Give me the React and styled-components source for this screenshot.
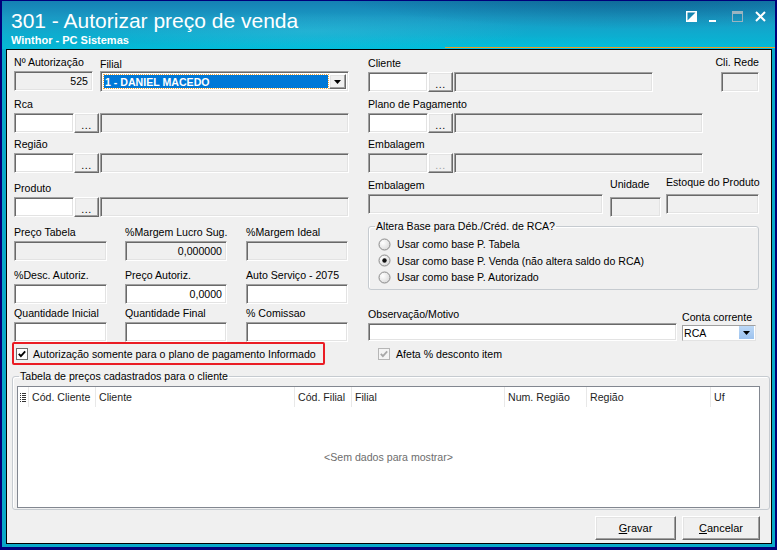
import React from "react";
import styled, { createGlobalStyle, css } from "styled-components";

const GlobalStyle = createGlobalStyle`
  html, body {
    margin: 0;
    padding: 0;
    background: #00007a;
  }
  * {
    box-sizing: border-box;
  }
`;

const sunken = css`
  border: 1px solid;
  border-color: #a0a0a0 #ffffff #ffffff #a0a0a0;
  box-shadow: inset 1px 1px 0 #696969, inset -1px -1px 0 #e3e3e3;
`;

const raised = css`
  border: 1px solid;
  border-color: #ffffff #696969 #696969 #ffffff;
  box-shadow: inset -1px -1px 0 #a0a0a0, inset 1px 1px 0 #e3e3e3;
`;

const Window = styled.div`
  width: 777px;
  height: 550px;
  display: flex;
  flex-direction: column;
  border: 2px solid #00007a;
  border-top-width: 1px;
  border-bottom-width: 3px;
  background: #08a8c8;
  font-family: "Liberation Sans", Arial, sans-serif;
`;

const TitleBar = styled.div`
  flex: none;
  height: 48px;
  display: flex;
  flex-direction: column;
  color: #fff;
  background:
    radial-gradient(ellipse 460px 60px at 82% -14px, rgba(6, 70, 110, 0.55), transparent 70%),
    radial-gradient(ellipse 320px 26px at 40% 30px, rgba(120, 220, 240, 0.18), transparent 70%),
    radial-gradient(ellipse 700px 34px at 60% 58px, rgba(0, 196, 224, 0.95), transparent 70%),
    linear-gradient(180deg, #1580b4 0%, #1a9ac4 35%, #0eaccf 70%, #04b8d6 100%);
`;

const TitleRow = styled.div`
  display: flex;
  align-items: flex-start;
  padding: 0 9px 0 9px;
`;

const Caption = styled.div`
  font-size: 21px;
  line-height: 24px;
  padding-top: 8px;
`;

const Controls = styled.div`
  margin-left: auto;
  display: flex;
  gap: 12px;
  padding-top: 10px;
`;

const Subtitle = styled.div`
  padding-left: 9px;
  padding-top: 1px;
  font-size: 11px;
  font-weight: bold;
  line-height: 13px;
`;

const Stripe = styled.div`
  margin: auto 0 1px auto;
  width: 330px;
  height: 2px;
  background: #f29a1c;
`;

const Body = styled.div`
  flex: 1;
  display: flex;
  padding: 0 3px 3px 4px;
`;

const Panel = styled.div`
  flex: 1;
  display: flex;
  flex-direction: column;
  border: 1px solid #000;
  background: #f0f0f0;
  font-size: 10.6px;
  color: #000;
`;

const Form = styled.div`
  display: flex;
  align-items: flex-start;
  gap: 19px;
  padding: 5px 11px 0 7px;
`;

const Column = styled.div`
  width: ${(p) => p.$w}px;
  display: flex;
  flex-direction: column;
`;

const Row = styled.div`
  display: flex;
  align-items: ${(p) => p.$align || "flex-start"};
  justify-content: ${(p) => p.$justify || "flex-start"};
  gap: ${(p) => p.$gap || 0}px;
  margin-top: ${(p) => p.$mt || 0}px;
`;

const Field = styled.div`
  display: flex;
  flex-direction: column;
  align-items: ${(p) => (p.$right ? "flex-end" : "stretch")};
  width: ${(p) => (p.$w ? `${p.$w}px` : "auto")};
  margin-left: ${(p) => p.$ml || 0}px;
`;

const Label = styled.div`
  height: 14px;
  line-height: 14px;
  white-space: nowrap;
  margin-top: ${(p) => p.$mt || 0}px;
  margin-bottom: ${(p) => (p.$mb === undefined ? 2 : p.$mb)}px;
`;

const TextBox = styled.div`
  ${sunken};
  width: ${(p) => (p.$w ? `${p.$w}px` : "100%")};
  height: ${(p) => p.$h || 20}px;
  background: ${(p) => (p.$white ? "#fff" : "#f0f0f0")};
  text-align: ${(p) => p.$align || "left"};
  padding: 0 4px;
  line-height: ${(p) => (p.$h || 20) - 2}px;
  flex: none;
`;

const Lookup = styled.div`
  display: flex;
  height: 20px;
`;

const DotsButton = styled.div`
  ${raised};
  width: 25px;
  height: 20px;
  margin-right: 1px;
  background: #f0f0f0;
  color: ${(p) => (p.$disabled ? "#a0a0a0" : "#000")};
  line-height: 22px;
  text-align: center;
  letter-spacing: 0.5px;
`;

const Combo = styled.div`
  ${sunken};
  width: ${(p) => p.$w}px;
  height: 21px;
  background: #fff;
  display: flex;
  padding: 2px;
`;

const Selection = styled.div`
  flex: 1;
  margin: 1px;
  background: #0078d7;
  outline: 1px dotted #f3a63a;
  color: #fff;
  font-weight: bold;
  line-height: 15px;
  padding-left: 1px;
`;

const DropButton = styled.div`
  ${raised};
  width: 17px;
  background: #f0f0f0;
  display: flex;
  align-items: center;
  justify-content: center;
`;

const SmallCombo = styled.div`
  width: ${(p) => p.$w}px;
  height: 16px;
  border: 1px solid;
  border-color: #a0a0a0 #e3e3e3 #e3e3e3 #a0a0a0;
  background: #fff;
  display: flex;
  align-items: center;
  padding-left: 1px;
`;

const SmallComboText = styled.div`
  flex: 1;
  line-height: 14px;
`;

const BlueDrop = styled.div`
  width: 15px;
  height: 13px;
  margin-right: 1px;
  background: linear-gradient(180deg, #bcd8f6, #9cc2ee);
  display: flex;
  align-items: center;
  justify-content: center;
`;

const Highlight = styled.div`
  display: flex;
  align-items: center;
  gap: 5px;
  width: 313px;
  height: 23px;
  margin-left: -2px;
  padding-left: 2px;
  border: 2px solid #ea1c24;
  border-radius: 2px;
  white-space: nowrap;
`;

const CheckLine = styled.div`
  display: flex;
  align-items: center;
  gap: ${(p) => p.$gap || 5}px;
  height: 14px;
  margin-top: ${(p) => p.$mt || 0}px;
  padding-left: ${(p) => p.$pl || 0}px;
  white-space: nowrap;
`;

const Group = styled.fieldset`
  margin: ${(p) => p.$margin};
  padding: ${(p) => p.$padding};
  border: 1px solid #c6cbd0;
  border-radius: 3px;
  box-shadow: inset 1px 1px 0 #ffffff;
  min-width: 0;
`;

const Legend = styled.legend`
  padding: 0 1px;
  margin-left: ${(p) => p.$ml || 0}px;
  line-height: 14px;
  font-size: 10.6px;
`;

const RadioLine = styled.div`
  display: flex;
  align-items: center;
  gap: 6px;
  height: 16.5px;
  white-space: nowrap;
`;

const Table = styled.div`
  height: 122px;
  display: flex;
  flex-direction: column;
  background: #fff;
  border: 1px solid #828790;
`;

const HeaderRow = styled.div`
  display: grid;
  grid-template-columns: 11px 67px 199px 57px 153px 82px 124px 1fr;
  height: 20px;
  color: #1e1e1e;
`;

const HeaderCell = styled.div`
  display: flex;
  align-items: center;
  justify-content: ${(p) => (p.$icon ? "center" : "flex-start")};
  padding-left: ${(p) => (p.$icon ? 0 : 3)}px;
  border-right: 1px solid #e8e8e8;
  white-space: nowrap;
  &:last-child {
    border-right: none;
  }
`;

const EmptyState = styled.div`
  flex: 1;
  display: flex;
  align-items: center;
  justify-content: center;
  color: #6d6d6d;
`;

const Footer = styled.div`
  display: flex;
  justify-content: flex-end;
  gap: 6px;
  padding: 6px 11px 0 0;
`;

const Button = styled.div`
  ${raised};
  width: ${(p) => p.$w}px;
  height: 24px;
  background: #f0f0f0;
  display: flex;
  align-items: center;
  justify-content: center;
  font-size: 11px;
`;

const Arrow = () => (
  <svg width="7" height="4" viewBox="0 0 7 4">
    <path d="M0 0H7L3.5 4Z" fill="#000" />
  </svg>
);

const Check = ({ disabled }) => (
  <svg width="12" height="12" viewBox="0 0 12 12">
    <rect
      x="0.5"
      y="0.5"
      width="11"
      height="11"
      fill={disabled ? "#f4f4f4" : "#fff"}
      stroke={disabled ? "#b6b6b6" : "#6e6e6e"}
    />
    <path
      d="M2.8 5.8L4.9 8.2L9.2 3.4"
      fill="none"
      stroke={disabled ? "#a8a8a8" : "#000"}
      strokeWidth="1.8"
    />
  </svg>
);

const Radio = ({ checked }) => (
  <svg width="13" height="13" viewBox="0 0 13 13">
    <defs>
      <radialGradient id="rb" cx="0.35" cy="0.35" r="0.75">
        <stop offset="0" stopColor="#ffffff" />
        <stop offset="1" stopColor="#d8d8d8" />
      </radialGradient>
    </defs>
    <circle cx="6.5" cy="6.5" r="5.5" fill="url(#rb)" stroke="#8a8a8a" />
    {checked && <circle cx="6.5" cy="6.5" r="2.2" fill="#111" />}
  </svg>
);

const GridIcon = () => (
  <svg width="6" height="9" viewBox="0 0 6 9">
    {[0, 2, 4, 6, 8].map((y) => (
      <g key={y}>
        <rect x="0" y={y} width="1" height="1" fill="#333" />
        <rect x="2" y={y} width="4" height="1" fill="#333" />
      </g>
    ))}
  </svg>
);

const WindowIcons = () => (
  <Controls>
    <svg width="11" height="11" viewBox="0 0 11 11">
      <rect x="0.75" y="0.75" width="9.5" height="9.5" fill="none" stroke="#fff" strokeWidth="1.5" />
      <path d="M10 1V10H1Z" fill="#fff" />
    </svg>
    <svg width="11" height="11" viewBox="0 0 11 11">
      <rect x="0" y="9" width="7" height="2" fill="#fff" />
    </svg>
    <svg width="11" height="11" viewBox="0 0 11 11">
      <rect x="0.5" y="0.5" width="10" height="10" fill="none" stroke="#9ab4c0" />
      <rect x="0" y="0" width="11" height="3" fill="#9ab4c0" />
    </svg>
    <svg width="11" height="11" viewBox="0 0 11 11">
      <path d="M1 1L10 10M10 1L1 10" stroke="#fff" strokeWidth="2" />
    </svg>
  </Controls>
);

const columns = [
  "Cód. Cliente",
  "Cliente",
  "Cód. Filial",
  "Filial",
  "Num. Região",
  "Região",
  "Uf",
];

// lookup = code box + "..." button + description box
const LookupField = ({ label, descWidth, disabled }) => (
  <Field $w={60 + 26 + descWidth}>
    <Label>{label}</Label>
    <Lookup>
      <TextBox $w={60} $white={!disabled} />
      <DotsButton $disabled={disabled}>...</DotsButton>
      <TextBox $w={descWidth} />
    </Lookup>
  </Field>
);

export default function App() {
  return (
    <>
      <GlobalStyle />
      <Window>
        <TitleBar>
          <TitleRow>
            <Caption>301 - Autorizar preço de venda</Caption>
            <WindowIcons />
          </TitleRow>
          <Subtitle>Winthor - PC Sistemas</Subtitle>
          <Stripe />
        </TitleBar>
        <Body>
          <Panel>
            <Form>
              <Column $w={335}>
                <Row $gap={7}>
                  <Field $w={79}>
                    <Label>Nº Autorização</Label>
                    <TextBox $align="right">525</TextBox>
                  </Field>
                  <Field $w={249}>
                    <Label $mt={2} $mb={0}>Filial</Label>
                    <Combo $w={249}>
                      <Selection>1 - DANIEL MACEDO</Selection>
                      <DropButton>
                        <Arrow />
                      </DropButton>
                    </Combo>
                  </Field>
                </Row>
                <Row $mt={5}>
                  <LookupField label="Rca" descWidth={249} />
                </Row>
                <Row $mt={4}>
                  <LookupField label="Região" descWidth={249} />
                </Row>
                <Row $mt={8}>
                  <LookupField label="Produto" descWidth={249} />
                </Row>
                <Row $mt={8} $gap={18}>
                  <Field $w={93}>
                    <Label>Preço Tabela</Label>
                    <TextBox />
                  </Field>
                  <Field $w={102}>
                    <Label>%Margem Lucro Sug.</Label>
                    <TextBox $align="right">0,000000</TextBox>
                  </Field>
                  <Field $w={102} $ml={1}>
                    <Label>%Margem Ideal</Label>
                    <TextBox />
                  </Field>
                </Row>
                <Row $mt={7} $gap={18}>
                  <Field $w={93}>
                    <Label>%Desc. Autoriz.</Label>
                    <TextBox $white />
                  </Field>
                  <Field $w={102}>
                    <Label>Preço Autoriz.</Label>
                    <TextBox $white $align="right">0,0000</TextBox>
                  </Field>
                  <Field $w={102} $ml={1}>
                    <Label>Auto Serviço - 2075</Label>
                    <TextBox $white />
                  </Field>
                </Row>
                <Row $mt={2} $gap={18}>
                  <Field $w={93}>
                    <Label>Quantidade Inicial</Label>
                    <TextBox $white />
                  </Field>
                  <Field $w={102}>
                    <Label>Quantidade Final</Label>
                    <TextBox $white />
                  </Field>
                  <Field $w={102} $ml={1}>
                    <Label>% Comissao</Label>
                    <TextBox $white />
                  </Field>
                </Row>
                <Highlight>
                  <Check />
                  <span>Autorização somente para o plano de pagamento Informado</span>
                </Highlight>
              </Column>

              <Column $w={391}>
                <Row $align="flex-end" $justify="space-between">
                  <LookupField label="Cliente" descWidth={199} />
                  <Field $right>
                    <Label $mb={3}>Cli. Rede</Label>
                    <TextBox $w={38} />
                  </Field>
                </Row>
                <Row $mt={5}>
                  <LookupField label="Plano de Pagamento" descWidth={249} />
                </Row>
                <Row $mt={4}>
                  <LookupField label="Embalagem" descWidth={249} disabled />
                </Row>
                <Row $mt={2}>
                  <Field $w={235}>
                    <Label $mt={3}>Embalagem</Label>
                    <TextBox />
                  </Field>
                  <Field $w={51} $ml={7}>
                    <Label $mt={2} $mb={6}>Unidade</Label>
                    <TextBox />
                  </Field>
                  <Field $w={93} $ml={5}>
                    <Label $mb={5}>Estoque do Produto</Label>
                    <TextBox />
                  </Field>
                </Row>
                <Group $margin="2px 0 0 0" $padding="3px 0 3px 9px">
                  <Legend $ml={-3}>Altera Base para Déb./Créd. de RCA?</Legend>
                  <RadioLine>
                    <Radio />
                    <span>Usar como base P. Tabela</span>
                  </RadioLine>
                  <RadioLine>
                    <Radio checked />
                    <span>Usar como base P. Venda (não altera saldo do RCA)</span>
                  </RadioLine>
                  <RadioLine>
                    <Radio />
                    <span>Usar como base P. Autorizado</span>
                  </RadioLine>
                </Group>
                <Row $mt={17} $align="flex-end" $gap={5}>
                  <Field $w={309}>
                    <Label>Observação/Motivo</Label>
                    <TextBox $white $h={18} />
                  </Field>
                  <Field $w={74}>
                    <Label $mb={1}>Conta corrente</Label>
                    <SmallCombo $w={74}>
                      <SmallComboText>RCA</SmallComboText>
                      <BlueDrop>
                        <Arrow />
                      </BlueDrop>
                    </SmallCombo>
                  </Field>
                </Row>
                <CheckLine $mt={6} $pl={10} $gap={6}>
                  <Check disabled />
                  <span>Afeta % desconto item</span>
                </CheckLine>
              </Column>
            </Form>

            <Group $margin="4px 1px 0 5px" $padding="3px 9px 1px 4px">
              <Legend $ml={2}>Tabela de preços cadastrados para o cliente</Legend>
              <Table>
                <HeaderRow>
                  <HeaderCell $icon>
                    <GridIcon />
                  </HeaderCell>
                  {columns.map((c) => (
                    <HeaderCell key={c}>{c}</HeaderCell>
                  ))}
                </HeaderRow>
                <EmptyState>&lt;Sem dados para mostrar&gt;</EmptyState>
              </Table>
            </Group>

            <Footer>
              <Button $w={81}>
                <span>
                  <u>G</u>ravar
                </span>
              </Button>
              <Button $w={78}>
                <span>
                  <u>C</u>ancelar
                </span>
              </Button>
            </Footer>
          </Panel>
        </Body>
      </Window>
    </>
  );
}
